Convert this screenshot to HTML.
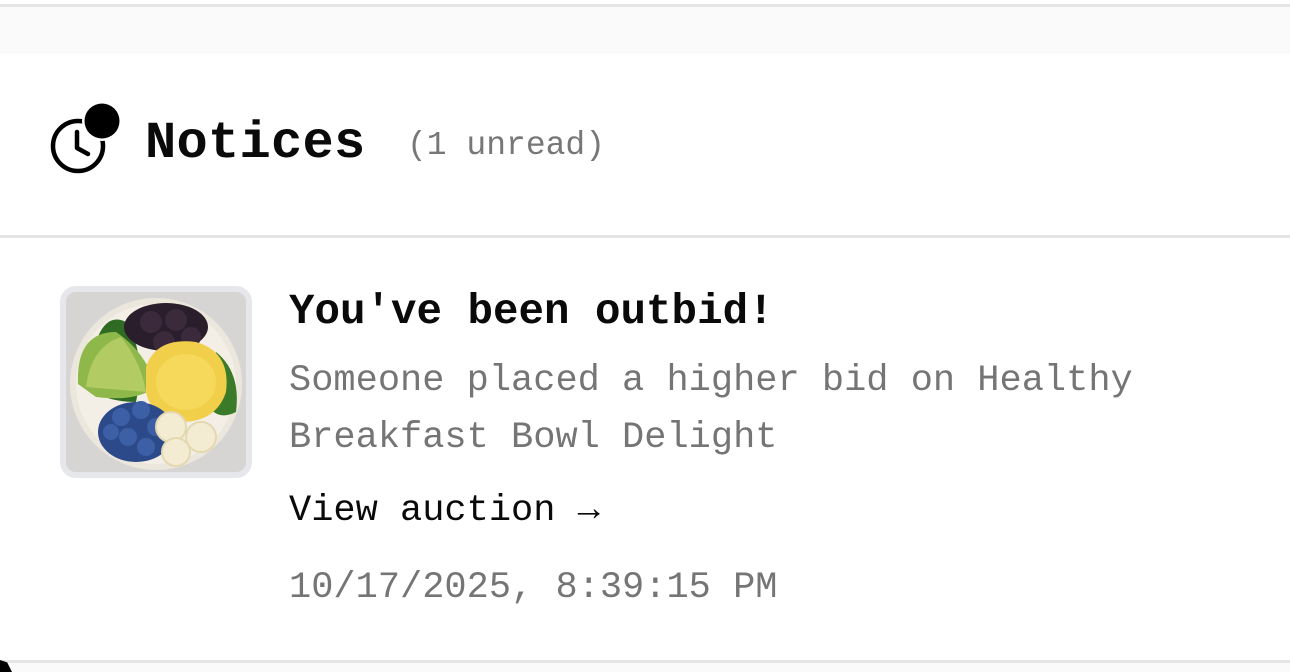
<!DOCTYPE html>
<html><head><meta charset="utf-8"><style>
*{margin:0;padding:0;box-sizing:border-box}
html,body{width:1290px;height:672px;overflow:hidden;background:#fff;font-family:"Liberation Mono",monospace;color:#0a0a0a}
.top{position:absolute;left:0;top:4px;width:1290px;height:50px;background:#fafafa;border-top:3px solid #e5e5e5}
.hdr{position:absolute;left:0;top:235px;width:1290px;height:3px;background:#e5e5e5}
.bot{position:absolute;left:0;top:660px;width:1290px;height:12px;background:#fafafa;border-top:3px solid #e5e5e5}
.t{position:absolute;white-space:nowrap}
</style></head><body>
<div class="top"></div>
<svg style="position:absolute;left:48px;top:100px" width="76" height="76" viewBox="0 0 76 76">
<circle cx="30" cy="46" r="25" fill="none" stroke="#000" stroke-width="4.5"/>
<path d="M29 32 V48 L40 54" fill="none" stroke="#000" stroke-width="4.5" stroke-linecap="round" stroke-linejoin="round"/>
<circle cx="54" cy="21" r="20" fill="#fff"/>
<circle cx="54" cy="21" r="17.5" fill="#000"/>
</svg>
<div class="t" style="left:145px;top:112px;font-size:52px;font-weight:bold;letter-spacing:0.3px;line-height:64px">Notices</div>
<div class="t" style="left:407px;top:126px;font-size:33px;color:#777;line-height:40px">(1 unread)</div>
<div class="hdr"></div>
<div style="position:absolute;left:60px;top:286px;width:192px;height:192px;border:6px solid #e5e7eb;border-radius:16px;overflow:hidden;background:#d9d8d6">
<svg width="180" height="180" viewBox="0 0 180 180">
<rect width="180" height="180" fill="#d6d5d3"/>
<circle cx="90" cy="92" r="86" fill="#ece7dc"/>
<circle cx="90" cy="92" r="80" fill="#f3efe6"/>
<path d="M30 50 Q40 20 60 30 Q80 60 70 110 Q40 110 20 95 Z" fill="#2f6b22"/>
<path d="M150 60 Q175 80 170 120 Q150 130 140 110 Z" fill="#3a7a28"/>
<path d="M12 92 Q10 40 50 40 Q80 60 90 95 Q70 110 30 105 Z" fill="#8fb84a"/>
<path d="M20 95 Q25 55 55 45 Q75 70 80 100 Z" fill="#b2cc63"/>
<ellipse cx="100" cy="35" rx="42" ry="24" fill="#2a1e2c"/>
<circle cx="85" cy="30" r="11" fill="#3a2a3c"/><circle cx="110" cy="28" r="11" fill="#3a2a3c"/><circle cx="125" cy="45" r="10" fill="#3a2a3c"/><circle cx="98" cy="50" r="11" fill="#3a2a3c"/>
<path d="M80 75 Q90 45 130 50 Q165 60 160 100 Q150 130 115 130 Q85 125 80 100 Z" fill="#f2cf4a"/>
<ellipse cx="120" cy="90" rx="30" ry="28" fill="#f6d95a"/>
<ellipse cx="70" cy="140" rx="38" ry="30" fill="#2c4a8a"/>
<g fill="#3d5fa6"><circle cx="55" cy="125" r="9"/><circle cx="75" cy="118" r="9"/><circle cx="90" cy="135" r="9"/><circle cx="62" cy="145" r="9"/><circle cx="80" cy="155" r="9"/><circle cx="45" cy="140" r="8"/></g>
<g fill="#f4ecd2" stroke="#e4d8b0" stroke-width="2"><circle cx="105" cy="135" r="15"/><circle cx="135" cy="145" r="15"/><circle cx="110" cy="160" r="14"/></g>
</svg></div>
<div class="t" style="left:289px;top:287px;font-size:42.5px;font-weight:bold;line-height:50px">You've been outbid!</div>
<div class="t" style="left:289px;top:353px;font-size:37px;color:#757575;line-height:57px">Someone placed a higher bid on Healthy<br>Breakfast Bowl Delight</div>
<div class="t" style="left:289px;top:489px;font-size:37px;line-height:44px">View auction →</div>
<div class="t" style="left:289px;top:566px;font-size:37px;color:#757575;line-height:44px">10/17/2025, 8:39:15 PM</div>
<div class="bot"></div>
<div style="position:absolute;left:0;top:660px;width:12px;height:12px;background:#000;clip-path:polygon(0 0,60% 20%,100% 100%,0 100%)"></div>
</body></html>
